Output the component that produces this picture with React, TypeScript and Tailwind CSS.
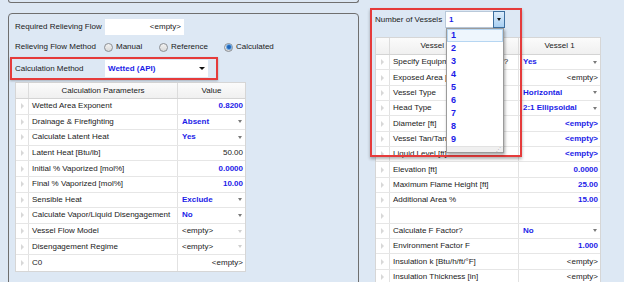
import React from 'react';

type RowType = 'num' | 'num-blue' | 'drop-blue' | 'drop-empty' | 'blank';
type Row = { name: string; value: string; type: RowType };

const leftRows: Row[] = [
  { name: 'Wetted Area Exponent', value: '0.8200', type: 'num-blue' },
  { name: 'Drainage & Firefighting', value: 'Absent', type: 'drop-blue' },
  { name: 'Calculate Latent Heat', value: 'Yes', type: 'drop-blue' },
  { name: 'Latent Heat [Btu/lb]', value: '50.00', type: 'num' },
  { name: 'Initial % Vaporized [mol%]', value: '0.0000', type: 'num-blue' },
  { name: 'Final % Vaporized [mol%]', value: '10.00', type: 'num-blue' },
  { name: 'Sensible Heat', value: 'Exclude', type: 'drop-blue' },
  { name: 'Calculate Vapor/Liquid Disengagement', value: 'No', type: 'drop-blue' },
  { name: 'Vessel Flow Model', value: '<empty>', type: 'drop-empty' },
  { name: 'Disengagement Regime', value: '<empty>', type: 'drop-empty' },
  { name: 'C0', value: '<empty>', type: 'num' },
];

const rightRows: Row[] = [
  { name: 'Specify Equipment Dimensions?', value: 'Yes', type: 'drop-blue' },
  { name: 'Exposed Area [ft²]', value: '<empty>', type: 'num' },
  { name: 'Vessel Type', value: 'Horizontal', type: 'drop-blue' },
  { name: 'Head Type', value: '2:1 Ellipsoidal', type: 'drop-blue' },
  { name: 'Diameter [ft]', value: '<empty>', type: 'num-blue' },
  { name: 'Vessel Tan/Tan Length [ft]', value: '<empty>', type: 'num-blue' },
  { name: 'Liquid Level [ft]', value: '<empty>', type: 'num-blue' },
  { name: 'Elevation [ft]', value: '0.0000', type: 'num-blue' },
  { name: 'Maximum Flame Height [ft]', value: '25.00', type: 'num-blue' },
  { name: 'Additional Area %', value: '15.00', type: 'num-blue' },
  { name: '', value: '', type: 'blank' },
  { name: 'Calculate F Factor?', value: 'No', type: 'drop-blue' },
  { name: 'Environment Factor F', value: '1.000', type: 'num-blue' },
  { name: 'Insulation k [Btu/h/ft/°F]', value: '<empty>', type: 'num' },
  { name: 'Insulation Thickness [in]', value: '<empty>', type: 'num' },
];

function Arrow({ light }: { light?: boolean }) {
  return (
    <span
      className={
        light
          ? 'block h-0 w-0 border-x-[2.5px] border-t-[3px] border-x-transparent border-t-[#cfcfcf]'
          : 'block h-0 w-0 border-x-[2.5px] border-t-[3px] border-x-transparent border-t-[#7a7a7a]'
      }
    />
  );
}

function Indicator({ w }: { w: string }) {
  return (
    <div className={`${w} flex shrink-0 items-center justify-center border-r border-[#e2e2e2]`}>
      <span className="h-0 w-0 border-y-[3px] border-l-[3px] border-y-transparent border-l-[#d8d8d8]" />
    </div>
  );
}

function ValueCell({ row }: { row: Row }) {
  if (row.type === 'blank') return <div className="flex-1" />;
  if (row.type === 'num')
    return <div className="flex flex-1 items-center justify-end pr-[2px] text-[#222]">{row.value}</div>;
  if (row.type === 'num-blue')
    return (
      <div className="flex flex-1 items-center justify-end pr-[2px] font-bold text-[#1c1ce8]">{row.value}</div>
    );
  if (row.type === 'drop-blue')
    return (
      <div className="flex flex-1 items-center justify-between pl-[4px] pr-[3px] font-bold text-[#1c1ce8]">
        <span>{row.value}</span>
        <Arrow />
      </div>
    );
  return (
    <div className="flex flex-1 items-center justify-between pl-[4px] pr-[3px] text-[#222]">
      <span>{row.value}</span>
      <Arrow light />
    </div>
  );
}

function Radio({ checked, label, w }: { checked?: boolean; label: string; w: string }) {
  return (
    <div className={`${w} flex items-center gap-[3px]`}>
      <span className="flex h-[9px] w-[9px] items-center justify-center rounded-full border border-[#8c8f94] bg-gradient-to-b from-[#f2f2f2] to-[#d9d9d9]">
        {checked && <span className="h-[4px] w-[4px] rounded-full bg-[#1d64b9] shadow-[0_0_0_1px_#6fa8e0]" />}
      </span>
      <span>{label}</span>
    </div>
  );
}

export default function App() {
  return (
    <div className="relative flex h-[282px] w-[624px] flex-col overflow-hidden bg-[#dde8f4] font-['Liberation_Sans',Arial,sans-serif] text-[8px] leading-none text-[#1a1a1a]">
      {/* bottom edge of the panel above */}
      <div className="ml-[8px] h-[3px] w-[351px] shrink-0 rounded-b-[3px] border-x border-b border-[#707070]" />

      <div className="flex items-start">
        {/* Left group panel */}
        <div className="ml-[8px] mt-[10px] h-[300px] w-[351px] shrink-0 rounded-[4px] border border-[#6f6f6f] pl-[6px] pt-[5px]">
          <div className="flex h-[16px] items-center">
            <div className="w-[90px]">Required Relieving Flow</div>
            <div className="flex h-[16px] w-[79px] items-center justify-end bg-white pr-[3px]">&lt;empty&gt;</div>
          </div>

          <div className="mt-[4px] flex h-[16px] items-center">
            <div className="w-[89px]">Relieving Flow Method</div>
            <Radio label="Manual" w="w-[55px]" />
            <Radio label="Reference" w="w-[65px]" />
            <Radio label="Calculated" checked w="w-[70px]" />
          </div>

          <div className="relative mt-[5px] flex h-[17px] items-center">
            <div className="pointer-events-none absolute -left-[5px] -top-[3px] h-[23px] w-[208px] border-2 border-[#e53b3b] shadow-[0_1px_2px_rgba(0,0,0,0.25)]" />
            <div className="w-[90px]">Calculation Method</div>
            <div className="flex h-[17px] w-[103px] items-center justify-between bg-white pl-[3px] pr-[3px]">
              <span className="font-bold text-[#1c1ce8]">Wetted (API)</span>
              <span className="block h-0 w-0 border-x-[3px] border-t-[3px] border-x-transparent border-t-[#111]" />
            </div>
          </div>

          {/* Calculation parameters grid */}
          <div className="mt-[5px] w-[231px] border border-[#d6d6d6] bg-white">
            <div className="flex h-[16px] border-b border-[#d4d4d4] bg-gradient-to-b from-[#fbfbfb] to-[#f0f0f0]">
              <div className="w-[13px] shrink-0 border-r border-[#dcdcdc]" />
              <div className="flex w-[149px] shrink-0 items-center justify-center border-r border-[#dcdcdc]">
                Calculation Parameters
              </div>
              <div className="flex flex-1 items-center justify-center">Value</div>
            </div>
            {leftRows.map((r) => (
              <div key={r.name} className="flex h-[15.6px] border-b border-[#e6e6e6] last:border-b-0">
                <Indicator w="w-[13px]" />
                <div className="flex w-[149px] shrink-0 items-center border-r border-[#e2e2e2] pl-[3px] whitespace-nowrap">
                  {r.name}
                </div>
                <ValueCell row={r} />
              </div>
            ))}
          </div>
        </div>

        {/* Right area */}
        <div className="relative mt-[8px] flex-1 pl-[16px]">
          <div className="flex h-[17px] items-center">
            <div className="w-[70px]">Number of Vessels</div>
            <div className="relative flex h-[17px] w-[60px] items-center border border-[#b9c9da] bg-white pl-[3px]">
              <span className="font-bold text-[#1c1ce8]">1</span>
              <div className="absolute -right-px -top-px flex h-[17px] w-[12px] items-center justify-center border border-[#3d6f9f] bg-gradient-to-b from-[#dcecfb] to-[#a9d0f2]">
                <span className="block h-0 w-0 border-x-[2.5px] border-t-[3px] border-x-transparent border-t-[#111]" />
              </div>
              {/* open dropdown list */}
              <div className="absolute left-0 top-[16px] z-20 flex h-[125px] w-[58px] flex-col border border-[#9b9b9b] bg-white shadow-[1px_2px_3px_rgba(0,0,0,0.35)]">
                {['1', '2', '3', '4', '5', '6', '7', '8', '9'].map((n, i) => (
                  <div
                    key={n}
                    className={
                      i === 0
                        ? 'flex h-[13.2px] items-center border border-[#b6d6f2] bg-[#eef6fd] pl-[3px] text-[9px] font-bold text-[#1c1ce8]'
                        : 'flex h-[13.2px] items-center pl-[4px] text-[9px] font-bold text-[#1c1ce8]'
                    }
                  >
                    {n}
                  </div>
                ))}
                <div className="mt-auto flex h-[6px] items-center justify-end border-t border-[#e2e2e2] bg-[#f0f0f0] pr-[2px]">
                  <span className="text-[5px] leading-none text-[#aaa]">⋰</span>
                </div>
              </div>
            </div>
          </div>

          {/* Vessel grid */}
          <div className="mt-[9px] w-[226px] border border-[#d6d6d6] bg-white">
            <div className="flex h-[17px] border-b border-[#d4d4d4] bg-gradient-to-b from-[#fbfbfb] to-[#f0f0f0]">
              <div className="w-[14px] shrink-0 border-r border-[#dcdcdc]" />
              <div className="flex w-[129px] shrink-0 items-center justify-center border-r border-[#dcdcdc]">
                Vessel Parameters
              </div>
              <div className="flex flex-1 items-center justify-center">Vessel 1</div>
            </div>
            {rightRows.map((r, i) => (
              <div key={i} className="flex h-[15.35px] border-b border-[#e6e6e6]">
                <Indicator w="w-[14px]" />
                <div className="flex w-[129px] shrink-0 items-center overflow-hidden border-r border-[#e2e2e2] pl-[3px] whitespace-nowrap">
                  {r.name}
                </div>
                <ValueCell row={r} />
              </div>
            ))}
          </div>

          {/* highlight box */}
          <div className="pointer-events-none absolute left-[11px] -top-[3px] z-10 h-[149px] w-[152px] border-2 border-[#e53b3b] shadow-[0_2px_3px_rgba(0,0,0,0.3)]" />
        </div>
      </div>
    </div>
  );
}
